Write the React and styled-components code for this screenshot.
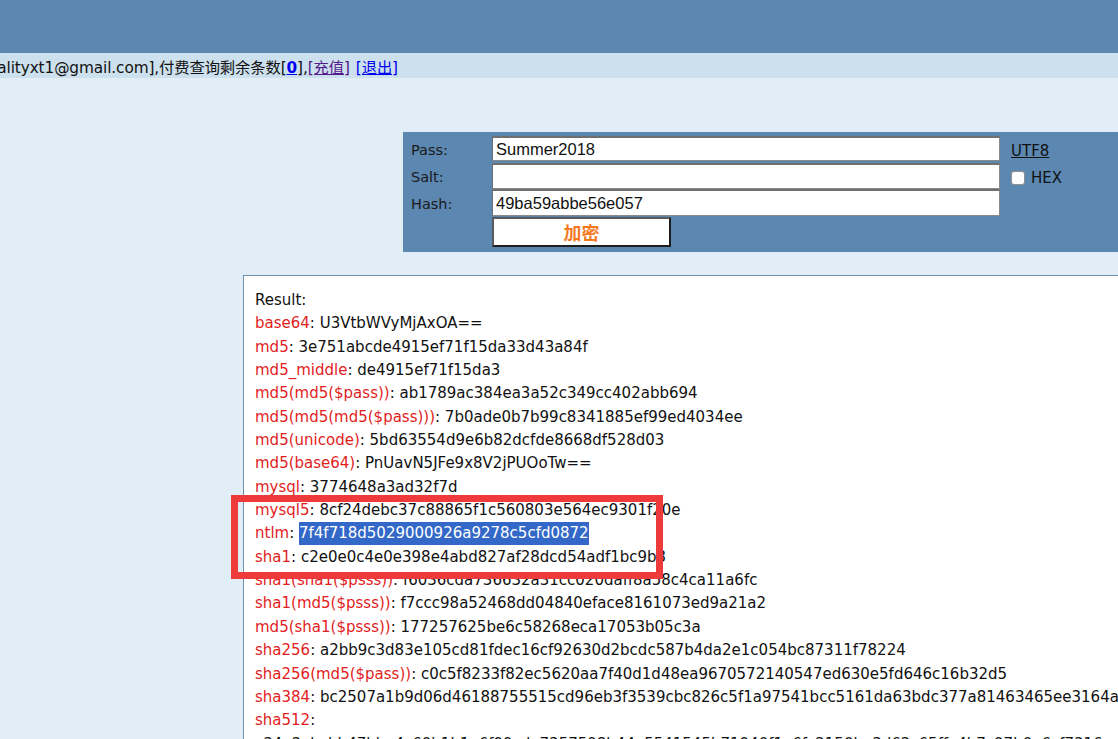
import React from 'react';
import styled, { createGlobalStyle } from 'styled-components';

const GlobalStyle = createGlobalStyle`
  html, body {
    margin: 0;
    padding: 0;
    overflow: hidden;
    background: #e1eef7;
  }
  body {
    font-family: 'DejaVu Sans', Verdana, 'Noto Sans CJK SC', sans-serif;
    color: #111;
  }
`;

const Page = styled.div`
  width: 1118px;
  height: 739px;
  overflow: hidden;
  background: #e1eef7;
`;

const TopBar = styled.div`
  height: 53px;
  background: #5c87b1;
`;

const UserBar = styled.div`
  height: 25px;
  background: #cde0ed;
  display: flex;
  align-items: center;
`;

const UserInfo = styled.div`
  width: 398px;
  display: flex;
  align-items: baseline;
  justify-content: flex-end;
  white-space: nowrap;
  font-size: 15.3px;
  font-family: 'DejaVu Sans', 'Noto Sans CJK SC', sans-serif;
  letter-spacing: -0.1px;
`;

const Count = styled.a`
  color: #0000ee;
  font-weight: bold;
  text-decoration: underline;
`;

const Link = styled.a`
  color: ${(p) => (p.$visited ? '#551a8b' : '#0000ee')};
  text-decoration: underline;
  margin-left: ${(p) => p.$gap || 0}px;
`;

const Main = styled.div`
  padding-top: 54px;
`;

const FormPanel = styled.div`
  margin-left: 403px;
  background: #5b87b1;
  height: 120px;
  padding-top: 4px;
  box-sizing: border-box;
  display: grid;
  grid-template-columns: 88px 508px auto;
  grid-template-rows: 27px 26px 28px 30px;
  column-gap: 1px;
`;

const Label = styled.div`
  padding-left: 8px;
  padding-top: ${(p) => p.$shift || 0}px;
  display: flex;
  align-items: center;
  font-size: 14.5px;
  color: #1a1a1a;
`;

const Input = styled.div`
  background: #fff;
  border: 1px solid #8a8a8a;
  border-top: 2px solid #6f6f6f;
  border-left: 1px solid #6f6f6f;
  box-sizing: border-box;
  height: ${(p) => p.$h || 25}px;
  align-self: ${(p) => p.$align || 'start'};
  font-family: 'Liberation Sans', Arial, sans-serif;
  font-size: 16.5px;
  display: flex;
  align-items: center;
  padding-left: 3px;
`;

const Side = styled.div`
  padding-left: 10px;
  padding-top: ${(p) => p.$shift || 0}px;
  font-size: 15px;
  display: flex;
  align-items: center;
`;

const Utf8 = styled.a`
  color: #111;
  text-decoration: underline;
  margin-top: 2px;
`;

const Check = styled.span`
  width: 12px;
  height: 12px;
  background: #fff;
  border: 1px solid #8f8f8f;
  border-radius: 3px;
  margin-right: 6px;
  margin-top: 1px;
`;

const Button = styled.div`
  width: 179px;
  height: 30px;
  box-sizing: border-box;
  background: #fff;
  border: 2px solid;
  border-color: #5a5a5a #1e1e1e #1e1e1e #5a5a5a;
  display: flex;
  align-items: center;
  justify-content: center;
  color: #f57a1f;
  font-weight: bold;
  font-size: 18px;
  font-family: 'Noto Sans CJK SC', sans-serif;
`;

const ResultBox = styled.div`
  position: relative;
  margin: 23px 0 0 243px;
  width: 1100px;
  background: #fff;
  border: 1px solid #6f8fae;
  padding: 13px 0 0 11px;
  white-space: nowrap;
  font-size: 15px;
  line-height: 23.35px;
  color: #111;
`;

const Line = styled.div``;

const Key = styled.span`
  color: #e21d1d;
`;

const Selected = styled.span`
  background: #3468c8;
  color: #fff;
  padding: 2px 0 3px;
`;

const Marker = styled.div`
  position: absolute;
  left: -13px;
  top: 219px;
  width: 432px;
  height: 84px;
  box-sizing: border-box;
  border: 7px solid #ef3a3c;
  pointer-events: none;
`;

const rows = [
  ['base64', 'U3VtbWVyMjAxOA=='],
  ['md5', '3e751abcde4915ef71f15da33d43a84f'],
  ['md5_middle', 'de4915ef71f15da3'],
  ['md5(md5($pass))', 'ab1789ac384ea3a52c349cc402abb694'],
  ['md5(md5(md5($pass)))', '7b0ade0b7b99c8341885ef99ed4034ee'],
  ['md5(unicode)', '5bd63554d9e6b82dcfde8668df528d03'],
  ['md5(base64)', 'PnUavN5JFe9x8V2jPUOoTw=='],
  ['mysql', '3774648a3ad32f7d'],
  ['mysql5', '8cf24debc37c88865f1c560803e564ec9301f20e'],
  ['ntlm', '7f4f718d5029000926a9278c5cfd0872', true],
  ['sha1', 'c2e0e0c4e0e398e4abd827af28dcd54adf1bc9b3'],
  ['sha1(sha1($psss))', 'f6036cda736632a31cc020daff8a58c4ca11a6fc'],
  ['sha1(md5($psss))', 'f7ccc98a52468dd04840eface8161073ed9a21a2'],
  ['md5(sha1($psss))', '177257625be6c58268eca17053b05c3a'],
  ['sha256', 'a2bb9c3d83e105cd81fdec16cf92630d2bcdc587b4da2e1c054bc87311f78224'],
  ['sha256(md5($pass))', 'c0c5f8233f82ec5620aa7f40d1d48ea9670572140547ed630e5fd646c16b32d5'],
  ['sha384', 'bc2507a1b9d06d46188755515cd96eb3f3539cbc826c5f1a97541bcc5161da63bdc377a81463465ee3164a5d0c2b84f7'],
  ['sha512', ''],
];

export default function App() {
  return (
    <Page>
      <GlobalStyle />
      <TopBar />
      <UserBar>
        <UserInfo>
          <span>欢迎您[qualityxt1@gmail.com],付费查询剩余条数[</span>
          <Count>0</Count>
          <span>],</span>
          <Link $visited>[充值]</Link>
          <Link $gap={6}>[退出]</Link>
        </UserInfo>
      </UserBar>
      <Main>
        <FormPanel>
          <Label>Pass:</Label>
          <Input>Summer2018</Input>
          <Side>
            <Utf8>UTF8</Utf8>
          </Side>
          <Label $shift={2}>Salt:</Label>
          <Input $h={26} $align="end" />
          <Side $shift={3}>
            <Check />
            HEX
          </Side>
          <Label $shift={1}>Hash:</Label>
          <Input $h={27}>49ba59abbe56e057</Input>
          <span />
          <span />
          <Button>加密</Button>
          <span />
        </FormPanel>
        <ResultBox>
          <Line>Result:</Line>
          {rows.map(([k, v, sel]) => (
            <Line key={k}>
              <Key>{k}</Key>: {sel ? <Selected>{v}</Selected> : v}
            </Line>
          ))}
          <Line>c34e3ebcbb47bba4c60b1b1a6f99cda7357598b44a5541545b71940f1a6fc2150ba3d62c65ffe4b7c97b0a6cf7316</Line>
          <Marker />
        </ResultBox>
      </Main>
    </Page>
  );
}
